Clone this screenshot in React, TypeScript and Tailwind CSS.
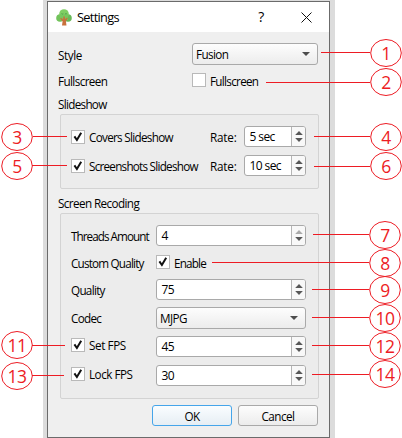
import type { ReactNode } from "react";

function Check({ checked = false }: { checked?: boolean }) {
  return (
    <span className="flex h-[14px] w-[14px] shrink-0 items-center justify-center border border-[#b9b9b9] bg-white">
      {checked && (
        <svg width="12" height="12" viewBox="0 0 12 12" fill="none" stroke="#111" strokeWidth="2">
          <path d="M2.4 5.4 L4.9 9 L9.2 1.8" />
        </svg>
      )}
    </span>
  );
}

function Spin({ value, className, atMin = false }: { value: string; className: string; atMin?: boolean }) {
  return (
    <div className={`flex h-[21px] shrink-0 rounded-[3px] border border-[#a9a9a9] bg-white ${className}`}>
      <span className="flex flex-1 items-center pl-[4.5px] text-[12px] tracking-[-0.6px]">{value}</span>
      <span className="flex w-[14px] items-center justify-center rounded-r-[2px] border-l border-[#b5b5b5] bg-[#f8f8f8]">
        <svg width="8" height="13" viewBox="0 0 8 13">
          <path d="M4 1 L7.8 5 H0.2 Z" fill={atMin ? "#aaaaaa" : "#575757"} />
          <path d="M4 12 L7.8 8 H0.2 Z" fill="#575757" />
        </svg>
      </span>
    </div>
  );
}

function Combo({ value, className }: { value: string; className: string }) {
  return (
    <div
      className={`flex h-[22px] shrink-0 items-center justify-between rounded-[3px] border border-[#a9a9a9] bg-linear-to-b from-[#fdfdfd] to-[#ececec] pl-[3px] pr-[7px] ${className}`}
    >
      <span>{value}</span>
      <svg width="8" height="4" viewBox="0 0 8 4">
        <path d="M0 0 H8 L4 4 Z" fill="#4d4d4d" />
      </svg>
    </div>
  );
}

function Button({ children, className }: { children: ReactNode; className: string }) {
  return (
    <button
      className={`flex h-[21px] w-[80px] items-center justify-center rounded-[3px] border bg-linear-to-b tracking-[-0.5px] ${className}`}
    >
      {children}
    </button>
  );
}

function Tree() {
  return (
    <svg width="16" height="17" viewBox="0 0 16 17" className="shrink-0">
      <circle cx="4" cy="9" r="3.8" fill="#72c35b" />
      <circle cx="12" cy="9" r="3.8" fill="#68b958" />
      <circle cx="8" cy="5" r="4.8" fill="#7fce63" />
      <rect x="4" y="5" width="8" height="6" fill="#76c75e" />
      <path d="M5.5 4.5 Q6.5 5.5 7.3 4.5 M9 4.5 Q10 5.5 10.8 4.5" stroke="#4d9546" strokeWidth="0.8" fill="none" />
      <path d="M6 16.4 L6.6 12.5 L4.2 9.5 L5 8.8 L7.2 10.6 L7.3 7.5 H8.8 L9 10.3 L11 8.5 L11.8 9.3 L9.9 12.2 L10.5 16.4 Z" fill="#c8713c" />
    </svg>
  );
}

const callouts = [
  { n: "1", cx: 386, cy: 53, y: 52.5, from: 321, to: 370 },
  { n: "2", cx: 386, cy: 82, y: 82.5, from: 266, to: 370 },
  { n: "3", cx: 17, cy: 137, y: 136.5, from: 33, to: 67 },
  { n: "4", cx: 386, cy: 137, y: 136.5, from: 314, to: 370 },
  { n: "5", cx: 17, cy: 166, y: 165.5, from: 32, to: 67 },
  { n: "6", cx: 386, cy: 166, y: 166.5, from: 314, to: 370 },
  { n: "7", cx: 385, cy: 235, y: 234.5, from: 313, to: 369 },
  { n: "8", cx: 385, cy: 263, y: 262.5, from: 212, to: 369 },
  { n: "9", cx: 385, cy: 290, y: 289.5, from: 312, to: 369 },
  { n: "10", cx: 385, cy: 318, y: 317.5, from: 312, to: 369 },
  { n: "11", cx: 17, cy: 345, y: 345.5, from: 32, to: 65 },
  { n: "12", cx: 385, cy: 346, y: 345.5, from: 312, to: 369 },
  { n: "13", cx: 17, cy: 376, y: 375.5, from: 32, to: 64 },
  { n: "14", cx: 385, cy: 374, y: 374.5, from: 312, to: 369 },
];

function Callouts() {
  return (
    <svg className="pointer-events-none absolute inset-0" width="402" height="438" viewBox="0 0 402 438">
      {callouts.map((c) => (
        <g key={c.n}>
          <line x1={c.from} x2={c.to} y1={c.y} y2={c.y} stroke="#ed1c24" />
          <ellipse cx={c.cx} cy={c.cy} rx="15.3" ry="13.5" fill="none" stroke="#ed1c24" />
          <text x={c.cx} y={c.cy + 7} textAnchor="middle" fontSize="17.5" fill="#ed1c24" fontFamily="'Open Sans', 'Noto Sans', sans-serif">
            {c.n}
          </text>
        </g>
      ))}
    </svg>
  );
}

export default function App() {
  return (
    <div className="relative flex h-[438px] w-[402px] overflow-hidden bg-white font-['Open_Sans','Noto_Sans',sans-serif] text-[11.7px] leading-[16px] tracking-[-0.6px] whitespace-nowrap text-black">
      <div className="ml-[43px] h-[438px] w-[292px] bg-[#dcdcdc] pl-1 pt-px">
        <div className="flex h-[437px] w-[283px] flex-col border border-[#6b6b6b] bg-[#efefef]">
          <header className="flex h-[30px] shrink-0 items-center bg-white pl-2">
            <Tree />
            <h1 className="ml-[5px] w-[179px] text-[12.8px] tracking-[-0.7px]">Settings</h1>
            <span className="w-[10px] text-center text-[14px]">?</span>
            <svg className="ml-[35px]" width="11" height="11" viewBox="0 0 11 11" stroke="#111" strokeWidth="1">
              <path d="M0.5 0.5 L10.5 10.5 M10.5 0.5 L0.5 10.5" />
            </svg>
          </header>

          <main className="flex flex-col pr-[10px] pl-[11px] pt-[11px]">
            <div className="-ml-px flex h-[22px] items-center">
              <span className="w-[134px] pt-[2px] tracking-[-0.4px]">Style</span>
              <Combo value="Fusion" className="w-[126px]" />
            </div>
            <div className="-ml-px mt-[8px] flex h-[14px] items-center">
              <span className="w-[134px] pt-[2px]">Fullscreen</span>
              <Check />
              <span className="ml-[4px] pt-[2px] tracking-[-0.7px]">Fullscreen</span>
            </div>
            <h2 className="-ml-px mt-[9px] h-[16px] tracking-[-0.7px]">Slideshow</h2>

            <section className="ml-px mt-[2px] flex h-[75px] w-[259px] flex-col gap-2 rounded-[2px] border border-[#d3d3d3] bg-[#ececec] pl-[10px] pt-[11px]">
              <div className="flex h-[21px] items-center">
                <Check checked />
                <span className="ml-[4px] w-[121px] tracking-[-0.7px]">Covers Slideshow</span>
                <span className="w-[34px] tracking-[-0.2px]">Rate:</span>
                <Spin value="5 sec" className="w-[62px]" />
              </div>
              <div className="flex h-[21px] items-center">
                <Check checked />
                <span className="ml-[4px] w-[121px] tracking-[-0.75px]">Screenshots Slideshow</span>
                <span className="w-[34px] tracking-[-0.2px]">Rate:</span>
                <Spin value="10 sec" className="w-[62px]" />
              </div>
            </section>

            <h2 className="-ml-px mt-[6px] h-[16px]">Screen Recoding</h2>

            <section className="ml-px mt-[2px] flex h-[186px] w-[259px] flex-col rounded-[2px] border border-[#d3d3d3] bg-[#ececec] pl-[10px] pt-[11px]">
              <div className="flex h-[21px] items-center">
                <span className="w-[85px] tracking-[-0.95px]">Threads Amount</span>
                <Spin value="4" atMin className="w-[150px]" />
              </div>
              <div className="mt-[9px] flex h-[14px] items-center">
                <span className="w-[85px] pt-[2px] tracking-[-0.8px]">Custom Quality</span>
                <Check checked />
                <span className="ml-[4px] pt-[2px] tracking-[-0.8px]">Enable</span>
              </div>
              <div className="mt-[10px] flex h-[21px] items-center">
                <span className="w-[85px] tracking-[-0.7px]">Quality</span>
                <Spin value="75" className="w-[150px]" />
              </div>
              <div className="mt-[7px] flex h-[22px] items-center">
                <span className="w-[85px] tracking-[-0.7px]">Codec</span>
                <Combo value="MJPG" className="w-[150px]" />
              </div>
              <div className="mt-[7px] flex h-[21px]">
                <div className="flex h-[18px] w-[85px] items-center">
                  <Check checked />
                  <span className="ml-[4px] tracking-[-0.4px]">Set FPS</span>
                </div>
                <Spin value="45" className="w-[150px]" />
              </div>
              <div className="mt-[8px] flex h-[21px]">
                <div className="flex h-[18px] w-[85px] items-center">
                  <Check checked />
                  <span className="ml-[4px] tracking-[-0.5px]">Lock FPS</span>
                </div>
                <Spin value="30" className="w-[150px]" />
              </div>
            </section>

            <footer className="mt-[6px] flex justify-end gap-[6px] pr-px">
              <Button className="border-[#45a5ea] from-[#fafdff] to-[#e6eef4]">OK</Button>
              <Button className="border-[#a9a9a9] from-[#fdfdfd] to-[#ececec]">Cancel</Button>
            </footer>
          </main>
        </div>
      </div>
      <Callouts />
    </div>
  );
}
